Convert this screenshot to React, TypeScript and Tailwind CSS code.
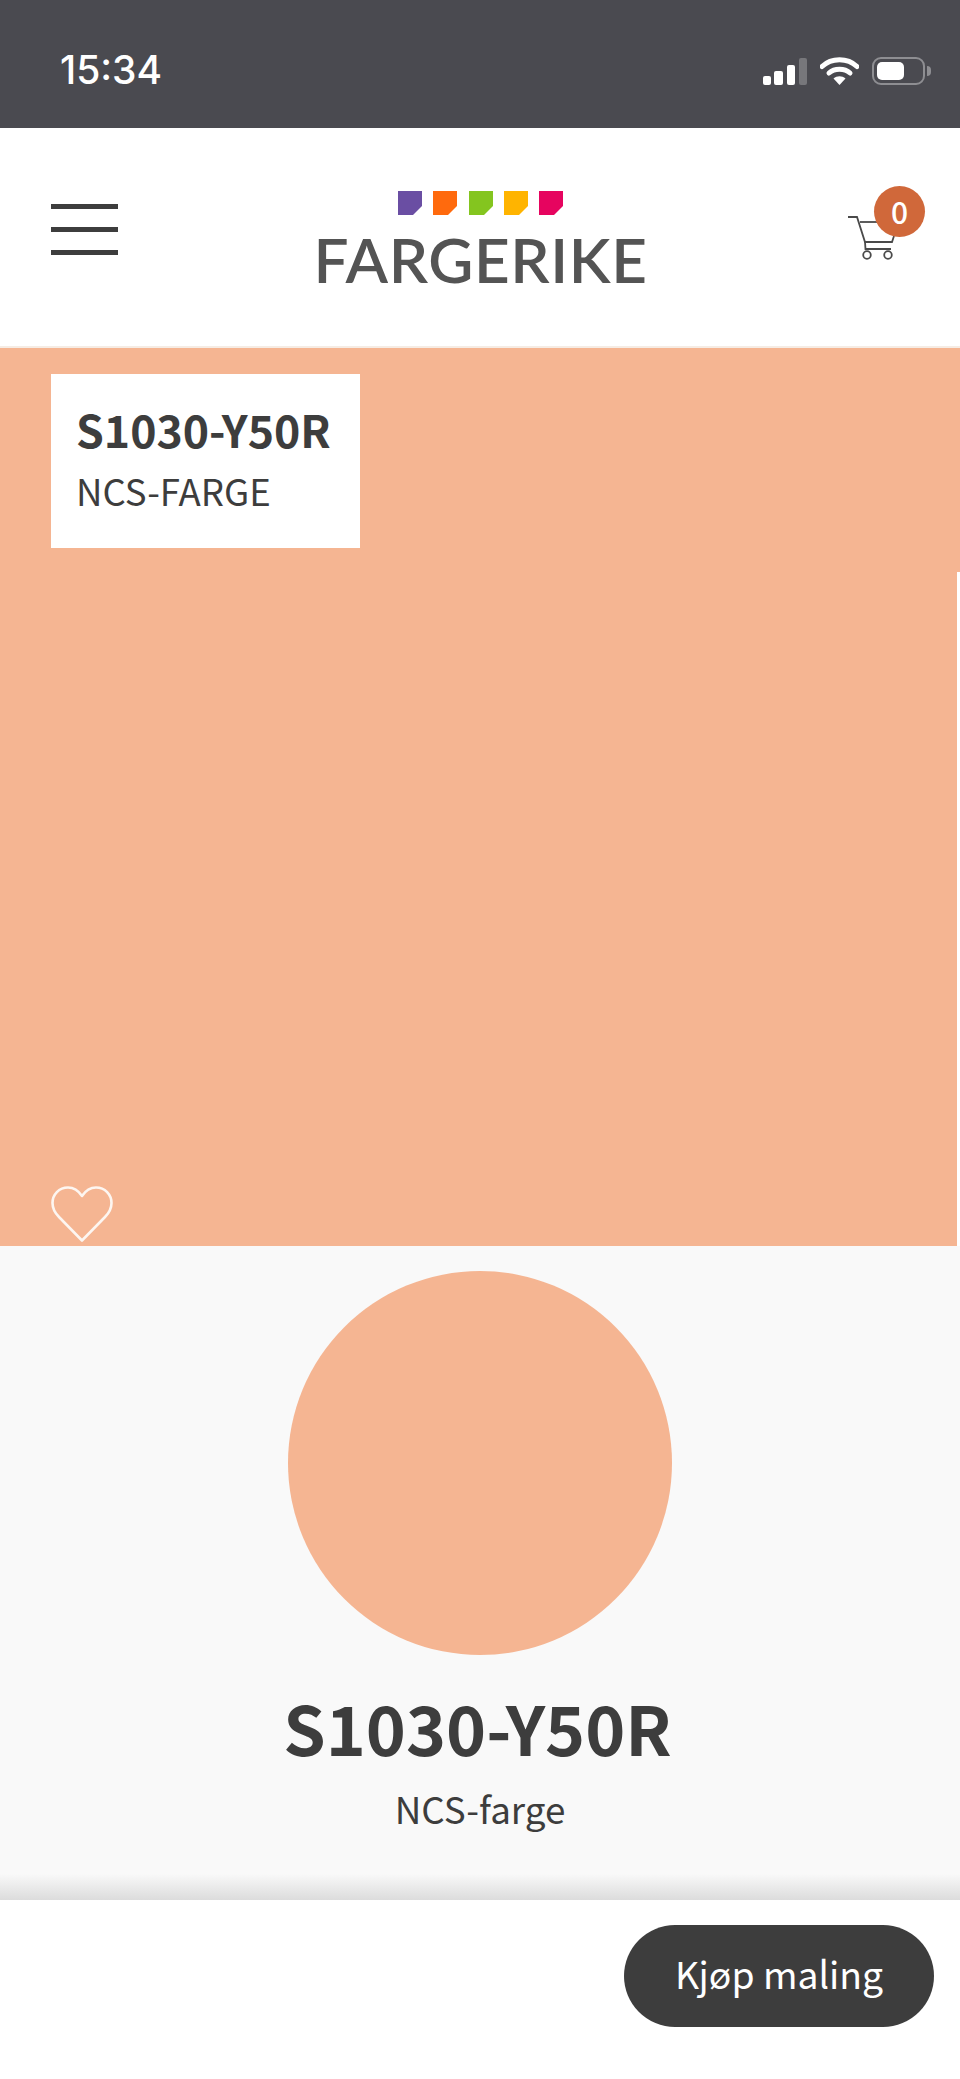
const SWATCH = '#f5b592';
const LOGO_SQUARES = ['#6a4ea3', '#ff6a0d', '#84c51f', '#ffb400', '#e6045f'];

const sans = { fontFamily: '"Noto Sans CJK JP", sans-serif' };

function SignalIcon() {
  return (
    <svg width="44" height="27" viewBox="0 0 44 27" fill="none">
      <rect x="0" y="18" width="8" height="9" rx="2" fill="#fff" />
      <rect x="11" y="13" width="9" height="14" rx="2" fill="#fff" />
      <rect x="24" y="7" width="8" height="20" rx="2" fill="#fff" />
      <rect x="36" y="0" width="8" height="27" rx="2" fill="#77777b" />
    </svg>
  );
}

function WifiIcon() {
  return (
    <svg width="39" height="29" viewBox="0 0 39 29" fill="none">
      <path d="M2 10.5C11.5 1.5 27.5 1.5 37 10.5" stroke="#fff" strokeWidth="5" strokeLinecap="round" />
      <path d="M9 17C14.5 12 24.5 12 30 17" stroke="#fff" strokeWidth="5" strokeLinecap="round" />
      <path d="M13.5 22.5L19.5 29L25.5 22.5C22 19.5 17 19.5 13.5 22.5Z" fill="#fff" />
    </svg>
  );
}

function BatteryIcon() {
  return (
    <div className="flex items-center gap-[2px]">
      <div className="flex h-[28px] w-[53px] items-center rounded-[9px] border-2 border-[#8e8e92] pl-[3px]">
        <div className="h-[18px] w-[27px] rounded-[5px] bg-white" />
      </div>
      <div className="h-[10px] w-[4px] rounded-r-full bg-[#8e8e92]" />
    </div>
  );
}

function CartIcon() {
  return (
    <svg width="50" height="44" viewBox="0 0 50 44" fill="none" stroke="#4a4a4a" strokeWidth="1.8">
      <path d="M1 1H10L18 26H45L47 20" />
      <path d="M13 6H32" />
      <path d="M18 26L18.5 33H44" />
      <circle cx="20" cy="39" r="3.8" />
      <circle cx="41" cy="39" r="3.8" />
    </svg>
  );
}

function HeartIcon() {
  return (
    <svg width="62" height="56" viewBox="0 0 62 56" fill="none">
      <path
        d="M31 10C27 4 22 1.5 17 1.5C8 1.5 1.5 8.5 1.5 17C1.5 23 4 27 8 31L31 54.5L54 31C58 27 60.5 23 60.5 17C60.5 8.5 54 1.5 45 1.5C40 1.5 35 4 31 10Z"
        stroke="#fdf6f1"
        strokeWidth="2.6"
        strokeLinejoin="round"
      />
    </svg>
  );
}

function Logo() {
  return (
    <div className="flex flex-col items-center">
      <div className="flex gap-[11.3px]">
        {LOGO_SQUARES.map((color) => (
          <svg key={color} width="24" height="24" viewBox="0 0 24 24">
            <path d="M0 0H24V15L15 24H0Z" fill={color} />
          </svg>
        ))}
      </div>
      <span
        className="mt-[17px] text-[62px] font-semibold leading-[54px] tracking-[0.6px] text-[#545454]"
        style={{ fontFamily: 'Lato, sans-serif' }}
      >
        FARGERIKE
      </span>
    </div>
  );
}

export default function App() {
  return (
    <div className="flex h-[2079px] w-[960px] flex-col overflow-hidden bg-white text-[#3d3d3d]" style={sans}>
      {/* status bar */}
      <div className="flex h-[128px] items-start justify-between bg-[#4a4a50] pl-[60px] pr-[29px] pt-[55px]">
        <span
          className="text-[39px] font-medium leading-[30px] text-white"
          style={{ fontFamily: 'Inter, sans-serif' }}
        >
          15:34
        </span>
        <div className="flex items-end gap-[13px] pt-[1px]">
          <SignalIcon />
          <WifiIcon />
          <BatteryIcon />
        </div>
      </div>

      {/* site header */}
      <header className="flex h-[220px] items-start justify-between border-b-2 border-[#f6ece4] pl-[51px] pr-[35px]">
        <div className="mt-[76px] flex w-[67px] flex-col gap-[18px]">
          <div className="h-[5px] bg-[#3d3d3d]" />
          <div className="h-[5px] bg-[#3d3d3d]" />
          <div className="h-[5px] bg-[#3d3d3d]" />
        </div>
        <div className="-ml-[4px] mt-[63px]">
          <Logo />
        </div>
        <div className="relative mt-[58px] h-[80px] w-[78px]">
          <div className="absolute bottom-[6px] left-0">
            <CartIcon />
          </div>
          <div className="absolute right-0 top-0 flex h-[51px] w-[51px] items-center justify-center rounded-full bg-[#d0683a] text-[30px] font-medium text-white">
            0
          </div>
        </div>
      </header>

      {/* colour preview */}
      <div className="h-[224px] pl-[51px] pt-[26px]" style={{ backgroundColor: SWATCH }}>
        <div className="h-[174px] w-[309px] bg-white pl-[25px] pt-[20px]">
          <div className="text-[44.6px] font-bold leading-[70px]">S1030-Y50R</div>
          <div className="mt-[5px] text-[36.6px] leading-[44px]">NCS-FARGE</div>
        </div>
      </div>
      <div className="flex h-[674px] w-[957px] items-end pb-[4px] pl-[51px]" style={{ backgroundColor: SWATCH }}>
        <HeartIcon />
      </div>

      {/* colour details */}
      <section className="flex h-[654px] flex-col items-center bg-[#f9f9f9]">
        <div className="mt-[25px] h-[384px] w-[384px] rounded-full" style={{ backgroundColor: SWATCH }} />
        <h1 className="-ml-[5px] mt-[28px] text-[68px] font-bold leading-[88px]">S1030-Y50R</h1>
        <p className="mt-[14px] text-[36.8px] leading-[46px]">NCS-farge</p>
        <div className="mt-auto h-[26px] w-full bg-gradient-to-b from-[#f9f9f9] to-[#dcdcdc]" />
      </section>

      {/* buy bar */}
      <div className="flex flex-1 justify-end pr-[26px] pt-[25px]">
        <button
          type="button"
          className="flex h-[102px] w-[310px] items-center justify-center rounded-full bg-[#3d3d3d] pb-[4px] text-[37.3px] text-white"
        >
          Kjøp maling
        </button>
      </div>
    </div>
  );
}
